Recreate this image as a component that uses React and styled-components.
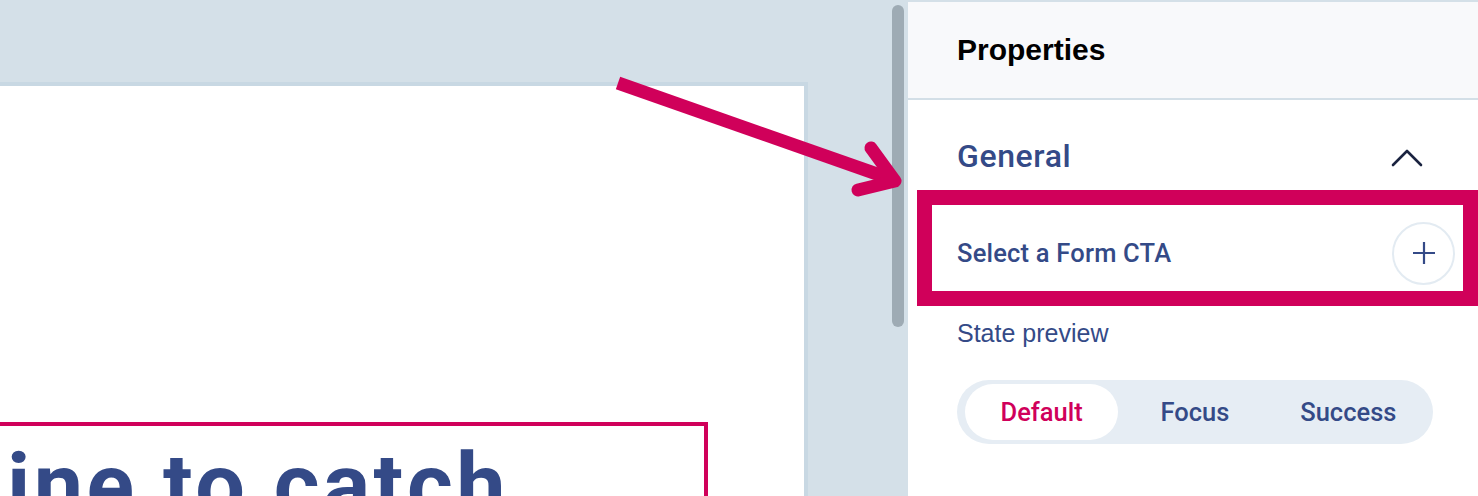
import React from "react";
import styled, { createGlobalStyle } from "styled-components";

const GlobalStyle = createGlobalStyle`
  html, body {
    margin: 0;
    padding: 0;
    background: #d4e0e8;
    overflow: hidden;
  }
  #root {
    height: 496px;
  }
`;

const Page = styled.div`
  position: relative;
  display: flex;
  width: 1478px;
  height: 496px;
  overflow: hidden;
  background: #d4e0e8;
`;

const Workspace = styled.div`
  flex: 0 0 892px;
  display: flex;
  flex-direction: column;
  padding-top: 82px;
  box-sizing: border-box;
`;

const Card = styled.div`
  width: 808px;
  flex: 1;
  background: #ffffff;
  border-top: 4px solid #c8d8e3;
  border-right: 4px solid #c8d8e3;
  box-sizing: border-box;
  display: flex;
  flex-direction: column;
  justify-content: flex-end;
  overflow: hidden;
`;

/* headline of the edited form, scrolled so only part of it shows */
const Headline = styled.div`
  width: 708px;
  height: 74px;
  border: 4px solid #d0005a;
  border-left: none;
  border-bottom: none;
  box-sizing: border-box;
  overflow: hidden;
  padding: 15px 0 0 7px;
  font-family: "Roboto", "Liberation Sans", sans-serif;
  font-weight: 700;
  font-size: 88px;
  line-height: 1;
  letter-spacing: 3.5px;
  color: #344a87;
  white-space: nowrap;
`;

const ScrollTrack = styled.div`
  flex: 0 0 12px;
  padding-top: 5px;
`;

const Thumb = styled.div`
  width: 12px;
  height: 322px;
  border-radius: 6px;
  background: #9eabb4;
`;

const Panel = styled.aside`
  position: relative;
  flex: 1;
  margin-left: 4px;
  margin-top: 2px;
  background: #ffffff;
  display: flex;
  flex-direction: column;
`;

const PanelHeader = styled.div`
  height: 96px;
  display: flex;
  align-items: center;
  padding-left: 49px;
  background: #f8f9fb;
  border-bottom: 2px solid #d3dfe7;
  font-family: "Liberation Sans", Arial, sans-serif;
  font-weight: 700;
  font-size: 30px;
  color: #000000;
`;

const PanelBody = styled.div`
  padding: 0 23px 0 49px;
  display: flex;
  flex-direction: column;
`;

const SectionRow = styled.div`
  display: flex;
  align-items: center;
  justify-content: space-between;
  height: ${(p) => p.$height}px;
  padding-right: ${(p) => p.$pr || 0}px;
`;

const SectionTitle = styled.h3`
  margin: 0 0 4px;
  font-family: "Roboto", "Liberation Sans", sans-serif;
  font-weight: 500;
  font-size: 32px;
  letter-spacing: 0.6px;
  color: #344a87;
`;

const FieldLabel = styled.span`
  font-family: "Roboto", "Liberation Sans", sans-serif;
  font-weight: 500;
  font-size: 25.5px;
  letter-spacing: 0.2px;
  color: #344a87;
`;

const PlainLabel = styled.div`
  margin-top: 20px;
  height: 46px;
  display: flex;
  align-items: center;
  font-family: "Liberation Sans", Arial, sans-serif;
  font-size: 25px;
  color: #344a87;
`;

const CircleButton = styled.button`
  width: 63px;
  height: 63px;
  border-radius: 50%;
  border: 2px solid #e3ebf2;
  background: #ffffff;
  display: flex;
  align-items: center;
  justify-content: center;
  padding: 0;
  color: #344a87;
`;

const Segmented = styled.div`
  margin-top: 24px;
  width: 476px;
  height: 64px;
  box-sizing: border-box;
  padding: 4px 8px;
  border-radius: 32px;
  background: #e6edf4;
  display: flex;
`;

const Segment = styled.button`
  flex: 1;
  border: none;
  border-radius: 28px;
  background: ${(p) => (p.$active ? "#ffffff" : "transparent")};
  color: ${(p) => (p.$active ? "#d0005a" : "#344a87")};
  font-family: "Roboto", "Liberation Sans", sans-serif;
  font-weight: 500;
  font-size: 25.5px;
  padding: 0;
`;

const Highlight = styled.div`
  position: absolute;
  left: 9px;
  right: 0;
  top: 188px;
  height: 116px;
  border: 15px solid #d0005a;
  box-sizing: border-box;
  pointer-events: none;
`;

const ArrowLayer = styled.svg`
  position: absolute;
  left: 0;
  top: 0;
  pointer-events: none;
`;

const Chevron = () => (
  <svg width="32" height="20" viewBox="0 0 32 20" fill="none">
    <path d="M2 17 L16 3 L30 17" stroke="#1a2340" strokeWidth="2.6" strokeLinecap="round" strokeLinejoin="round" />
  </svg>
);

const Plus = () => (
  <svg width="24" height="24" viewBox="0 0 24 24" fill="none">
    <path d="M12 1 V23 M1 12 H23" stroke="#344a87" strokeWidth="2.2" />
  </svg>
);

export default function App() {
  const states = ["Default", "Focus", "Success"];
  return (
    <Page>
      <GlobalStyle />
      <Workspace>
        <Card>
          <Headline>ine to catch</Headline>
        </Card>
      </Workspace>
      <ScrollTrack>
        <Thumb />
      </ScrollTrack>
      <Panel>
        <PanelHeader>Properties</PanelHeader>
        <PanelBody>
          <SectionRow $height={116} $pr={32}>
            <SectionTitle>General</SectionTitle>
            <Chevron />
          </SectionRow>
          <SectionRow $height={74}>
            <FieldLabel>Select a Form CTA</FieldLabel>
            <CircleButton aria-label="Add">
              <Plus />
            </CircleButton>
          </SectionRow>
          <PlainLabel>State preview</PlainLabel>
          <Segmented>
            {states.map((s, i) => (
              <Segment key={s} $active={i === 0}>
                {s}
              </Segment>
            ))}
          </Segmented>
        </PanelBody>
        <Highlight />
      </Panel>
      <ArrowLayer width="1478" height="496" viewBox="0 0 1478 496">
        <path d="M618 83 L894 180" stroke="#d0005a" strokeWidth="13" fill="none" />
        <path
          d="M871 148 L895 181 L858 190"
          stroke="#d0005a"
          strokeWidth="13"
          fill="none"
          strokeLinecap="round"
          strokeLinejoin="round"
        />
      </ArrowLayer>
    </Page>
  );
}
